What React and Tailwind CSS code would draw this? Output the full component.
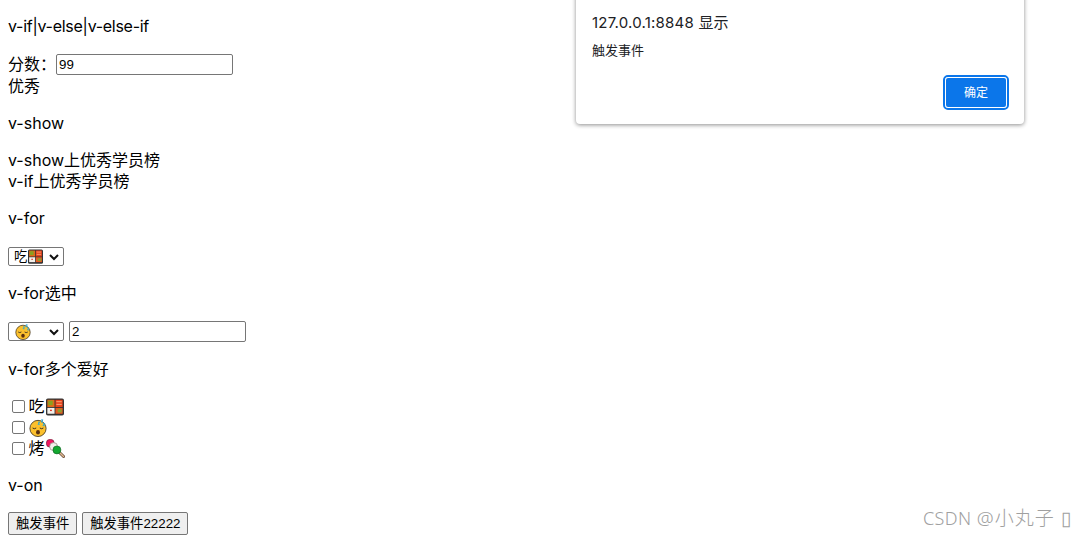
import React from 'react';

const font = "font-['Inter','Noto_Sans_CJK_SC',sans-serif]";
const ctrl = "font-['Liberation_Sans','Noto_Sans_CJK_SC',sans-serif] text-[13.33px]";

function Bento({ className }) {
  return (
    <svg viewBox="0 0 20 20" className={className}>
      <rect x="0" y="0.5" width="20" height="19" rx="2" fill="#333" />
      <rect x="1.5" y="2" width="8" height="8" fill="#e06a18" />
      <rect x="2.5" y="3" width="5" height="5" fill="#8aa020" />
      <rect x="10.5" y="2" width="8" height="8" fill="#e8401c" />
      <rect x="11.5" y="3.5" width="6" height="1.2" fill="#f5a070" />
      <rect x="11.5" y="6.5" width="6" height="1.2" fill="#f5a070" />
      <rect x="1.5" y="11" width="8" height="6.5" fill="#f4f0ea" />
      <rect x="4.5" y="13" width="2" height="1.5" fill="#e03020" />
      <rect x="10.5" y="11" width="8" height="6.5" fill="#e85a20" />
      <rect x="13" y="12.5" width="4.5" height="3.5" fill="#8aa030" />
    </svg>
  );
}

function Sleepy({ className }) {
  return (
    <svg viewBox="0 0 20 20" className={className}>
      <circle cx="10" cy="10.5" r="9" fill="#fbc02d" stroke="#3a3020" strokeWidth="0.9" />
      <path d="M4 10q2 1.6 4 0M12 10q2 1.6 4 0" fill="none" stroke="#3a3020" strokeWidth="1.1" />
      <ellipse cx="10" cy="14.8" rx="2.2" ry="2.5" fill="#5a3010" />
      <path d="M10 3.5h2l-2 2.4h2M13.5 1h2l-2 2.4h2M15.5 5h2l-2 2.4h2" fill="none" stroke="#29a8d8" strokeWidth="1.1" />
    </svg>
  );
}

function Dango({ className }) {
  return (
    <svg viewBox="0 0 20 20" className={className}>
      <path d="M12 12l6.5 6.5" stroke="#5a4030" strokeWidth="3" strokeLinecap="round" />
      <path d="M12 12l6.5 6.5" stroke="#e0b890" strokeWidth="1.6" strokeLinecap="round" />
      <circle cx="4.5" cy="4.5" r="4.2" fill="#f01860" stroke="#5a2030" strokeWidth="0.6" />
      <circle cx="8" cy="8" r="4.2" fill="#f4f0ea" stroke="#8a8078" strokeWidth="0.7" />
      <circle cx="11.5" cy="11.5" r="4.2" fill="#14a830" stroke="#0a5a20" strokeWidth="0.6" />
    </svg>
  );
}

function Check({ children }) {
  return (
    <div className="flex h-[21px] items-center">
      <input type="checkbox" className="mx-[4px] h-[13px] w-[13px] appearance-none rounded-[2px] border border-[#767676] bg-white" />
      <span className="-ml-[0.5px] flex items-center">{children}</span>
    </div>
  );
}

function Select({ children }) {
  return (
    <div className={`flex h-[19px] w-[56px] items-center rounded-[2px] border border-[#767676] bg-white pl-[5px] ${ctrl}`}>
      <span className="flex flex-1 items-center">{children}</span>
      <svg viewBox="0 0 12 12" className="mr-[3px] h-[12px] w-[12px]">
        <path d="M2 4l4 4 4-4" fill="none" stroke="#111" strokeWidth="2" />
      </svg>
    </div>
  );
}

function Btn({ children }) {
  return (
    <button className={`h-[23px] rounded-[2px] border border-[#767676] bg-[#efefef] px-[7px] text-black ${ctrl}`}>
      {children}
    </button>
  );
}

export default function App() {
  return (
    <div className={`relative h-[536px] w-[1085px] overflow-hidden bg-white px-[8px] text-[16px] leading-[21px] text-black ${font}`}>
      <p className="mt-[16px] mb-[17px] tracking-[-0.28px]">v-if|v-else|v-else-if</p>
      <div className="flex h-[22px] items-start">
        <span>分数：</span>
        <input readOnly value="99" className={`h-[21px] w-[177px] rounded-[2px] border border-[#767676] px-[2px] outline-none ${ctrl}`} />
      </div>
      <div>优秀</div>
      <p className="my-[16px]">v-show</p>
      <div>v-show上优秀学员榜</div>
      <div>v-if上优秀学员榜</div>
      <p className="mt-[16px] mb-[18px]">v-for</p>
      <Select>吃<Bento className="ml-[1px] h-[15px] w-[15px]" /></Select>
      <p className="mt-[17px] mb-[17px]">v-for选中</p>
      <div className="flex items-center gap-[5px]">
        <Select><Sleepy className="ml-[1px] h-[16px] w-[16px]" /></Select>
        <input readOnly value="2" className={`h-[21px] w-[177px] rounded-[2px] border border-[#767676] px-[2px] outline-none ${ctrl}`} />
      </div>
      <p className="mt-[17px] mb-[16px]">v-for多个爱好</p>
      <Check>吃<Bento className="ml-[1px] h-[18px] w-[18px]" /></Check>
      <Check><Sleepy className="h-[18px] w-[18px]" /></Check>
      <Check>烤<Dango className="ml-[1px] h-[19px] w-[19px]" /></Check>
      <p className="my-[16px]">v-on</p>
      <div className="flex gap-[5px]">
        <Btn>触发事件</Btn>
        <button className={`h-[23px] w-[106px] rounded-[2px] border border-[#767676] bg-[#efefef] text-black ${ctrl}`}>触发事件22222</button>
      </div>

      <div className="absolute top-[-8px] left-[576px] flex h-[132px] w-[448px] flex-col rounded-b-[4px] bg-white px-[16px] shadow-[0_1px_4px_rgba(0,0,0,0.45)]">
        <div className="mt-[21px] text-[15px] leading-[20px] tracking-[0.22px] text-[#202124]">127.0.0.1:8848 显示</div>
        <div className="mt-[7px] text-[13px] leading-[20px] text-[#202124]">触发事件</div>
        <div className="absolute top-[83px] right-[15px] rounded-[5px] border-2 border-[#0b76ea]">
          <div className="flex h-[31px] w-[62px] items-center justify-center rounded-[3px] border border-white bg-[#0b76ea] text-[12px] text-white">
            确定
          </div>
        </div>
      </div>

      <div className="absolute top-[507px] left-[923px] whitespace-nowrap font-['Noto_Sans','Noto_Sans_CJK_SC',sans-serif] text-[18px] leading-[22px] font-light tracking-[0.4px] text-[#a0a0a0]">
        CSDN <span className="text-[19px] tracking-[1.1px]">@小丸子 ▯</span>
      </div>
    </div>
  );
}
